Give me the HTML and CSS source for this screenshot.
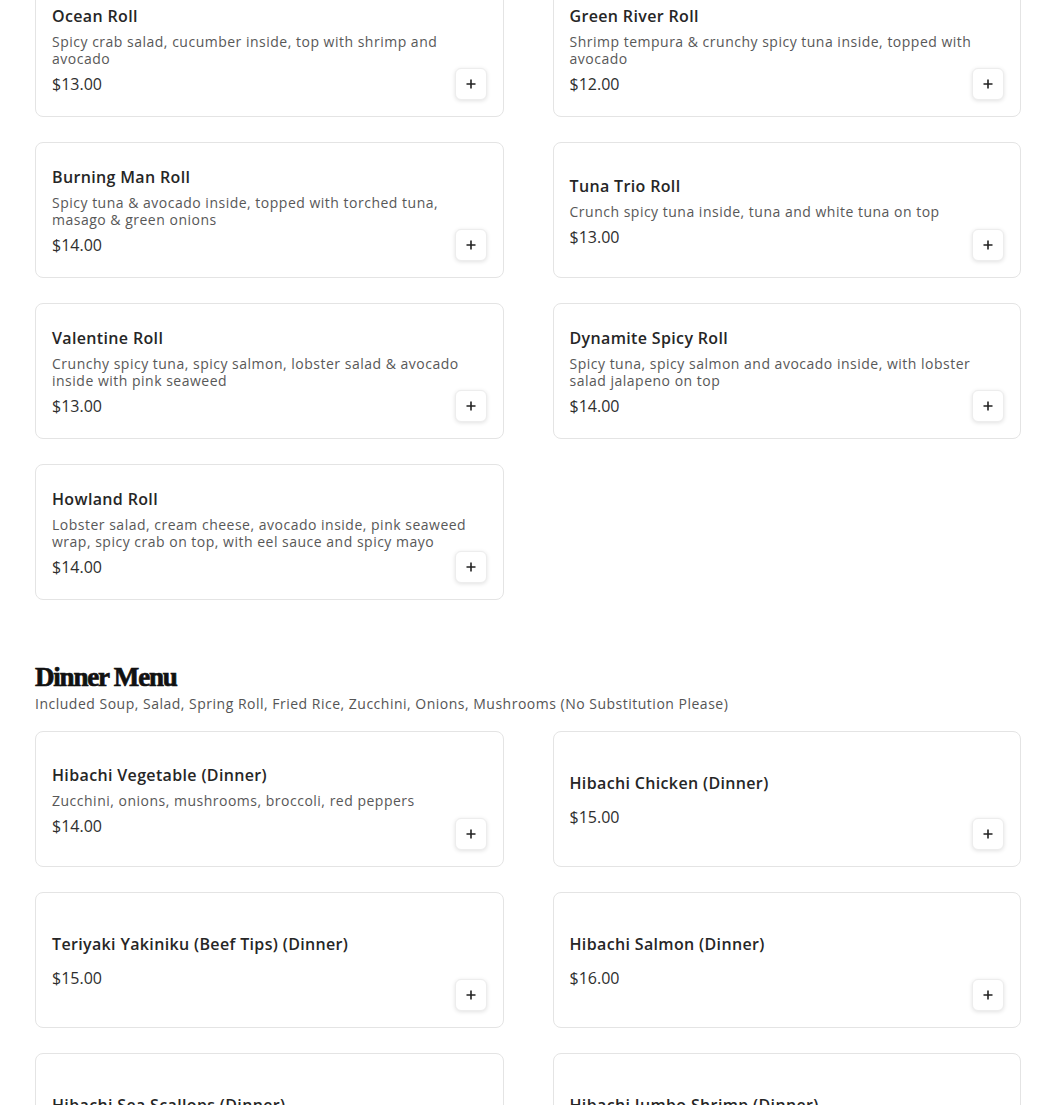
FILE: index.html
```html
<!DOCTYPE html>
<html lang="en">
<head>
<meta charset="utf-8">
<title>Menu</title>
<link rel="stylesheet" href="styles.css">
</head>
<body>
<main class="page">
  <section class="section section-first">
    <div class="grid">
      <div class="card"><div class="info"><h3 class="name">Ocean Roll</h3><p class="desc">Spicy crab salad, cucumber inside, top with shrimp and avocado</p><div class="price">$13.00</div></div><button class="add" aria-label="Add"><svg viewBox="0 0 12 12"><path d="M6 1.5v9M1.5 6h9"/></svg></button></div>
      <div class="card"><div class="info"><h3 class="name">Green River Roll</h3><p class="desc">Shrimp tempura &amp; crunchy spicy tuna inside, topped with avocado</p><div class="price">$12.00</div></div><button class="add" aria-label="Add"><svg viewBox="0 0 12 12"><path d="M6 1.5v9M1.5 6h9"/></svg></button></div>
      <div class="card"><div class="info"><h3 class="name">Burning Man Roll</h3><p class="desc">Spicy tuna &amp; avocado inside, topped with torched tuna, masago &amp; green onions</p><div class="price">$14.00</div></div><button class="add" aria-label="Add"><svg viewBox="0 0 12 12"><path d="M6 1.5v9M1.5 6h9"/></svg></button></div>
      <div class="card"><div class="info"><h3 class="name">Tuna Trio Roll</h3><p class="desc">Crunch spicy tuna inside, tuna and white tuna on top</p><div class="price">$13.00</div></div><button class="add" aria-label="Add"><svg viewBox="0 0 12 12"><path d="M6 1.5v9M1.5 6h9"/></svg></button></div>
      <div class="card"><div class="info"><h3 class="name">Valentine Roll</h3><p class="desc">Crunchy spicy tuna, spicy salmon, lobster salad &amp; avocado inside with pink seaweed</p><div class="price">$13.00</div></div><button class="add" aria-label="Add"><svg viewBox="0 0 12 12"><path d="M6 1.5v9M1.5 6h9"/></svg></button></div>
      <div class="card"><div class="info"><h3 class="name">Dynamite Spicy Roll</h3><p class="desc">Spicy tuna, spicy salmon and avocado inside, with lobster salad jalapeno on top</p><div class="price">$14.00</div></div><button class="add" aria-label="Add"><svg viewBox="0 0 12 12"><path d="M6 1.5v9M1.5 6h9"/></svg></button></div>
      <div class="card"><div class="info"><h3 class="name">Howland Roll</h3><p class="desc">Lobster salad, cream cheese, avocado inside, pink seaweed wrap, spicy crab on top, with eel sauce and spicy mayo</p><div class="price">$14.00</div></div><button class="add" aria-label="Add"><svg viewBox="0 0 12 12"><path d="M6 1.5v9M1.5 6h9"/></svg></button></div>
    </div>
  </section>

  <section class="section">
    <h2 class="section-title">Dinner Menu</h2>
    <p class="section-sub">Included Soup, Salad, Spring Roll, Fried Rice, Zucchini, Onions, Mushrooms (No Substitution Please)</p>
    <div class="grid">
      <div class="card"><div class="info"><h3 class="name">Hibachi Vegetable (Dinner)</h3><p class="desc">Zucchini, onions, mushrooms, broccoli, red peppers</p><div class="price">$14.00</div></div><button class="add" aria-label="Add"><svg viewBox="0 0 12 12"><path d="M6 1.5v9M1.5 6h9"/></svg></button></div>
      <div class="card"><div class="info"><h3 class="name">Hibachi Chicken (Dinner)</h3><div class="price price-gap">$15.00</div></div><button class="add" aria-label="Add"><svg viewBox="0 0 12 12"><path d="M6 1.5v9M1.5 6h9"/></svg></button></div>
      <div class="card"><div class="info"><h3 class="name">Teriyaki Yakiniku (Beef Tips) (Dinner)</h3><div class="price price-gap">$15.00</div></div><button class="add" aria-label="Add"><svg viewBox="0 0 12 12"><path d="M6 1.5v9M1.5 6h9"/></svg></button></div>
      <div class="card"><div class="info"><h3 class="name">Hibachi Salmon (Dinner)</h3><div class="price price-gap">$16.00</div></div><button class="add" aria-label="Add"><svg viewBox="0 0 12 12"><path d="M6 1.5v9M1.5 6h9"/></svg></button></div>
      <div class="card"><div class="info"><h3 class="name">Hibachi Sea Scallops (Dinner)</h3><div class="price price-gap">$18.00</div></div><button class="add" aria-label="Add"><svg viewBox="0 0 12 12"><path d="M6 1.5v9M1.5 6h9"/></svg></button></div>
      <div class="card"><div class="info"><h3 class="name">Hibachi Jumbo Shrimp (Dinner)</h3><div class="price price-gap">$17.00</div></div><button class="add" aria-label="Add"><svg viewBox="0 0 12 12"><path d="M6 1.5v9M1.5 6h9"/></svg></button></div>
    </div>
  </section>
</main>
</body>
</html>
```

FILE: styles.css
```css
* { box-sizing: border-box; }
html, body { margin: 0; padding: 0; background: #ffffff; }
body {
  font-family: "Open Sans", "Noto Sans", "Liberation Sans", sans-serif;
  color: #1c1c1c;
  overflow: hidden;
}
.page {
  width: 986px;
  margin: -19px 0 0 35px;
}
.section { margin-bottom: 61px; }
.grid {
  display: grid;
  grid-template-columns: 1fr 1fr;
  column-gap: 49px;
  row-gap: 25px;
}
.card {
  display: grid;
  height: 136px;
  padding: 16px;
  border: 1px solid #e4e4e4;
  border-radius: 8px;
  background: #fff;
}
.info {
  grid-area: 1 / 1;
  align-self: center;
  display: flex;
  flex-direction: column;
  padding-top: 2px;
}
.name {
  margin: 0;
  font-size: 16px;
  line-height: 24px;
  font-weight: 600;
  letter-spacing: 0.35px;
  color: #262626;
}
.desc {
  margin: 5px 0 5px;
  font-size: 14px;
  line-height: 17px;
  letter-spacing: 0.5px;
  color: #585858;
}
.price {
  font-size: 16px;
  line-height: 24px;
  color: #2e2e2e;
}
.price-gap { margin-top: 10px; }
.add {
  grid-area: 1 / 1;
  align-self: end;
  justify-self: end;
  width: 32px;
  height: 32px;
  padding: 0;
  display: flex;
  align-items: center;
  justify-content: center;
  background: #fff;
  border: 1px solid #ededed;
  border-radius: 6px;
  box-shadow: 0 1px 4px rgba(0,0,0,0.12);
  cursor: pointer;
}
.add svg {
  width: 12px;
  height: 12px;
  fill: none;
  stroke: #222;
  stroke-width: 1.6;
}
.section-title {
  margin: 0;
  font-family: "Liberation Serif", "DejaVu Serif", serif;
  font-weight: 900;
  font-size: 27px;
  line-height: 32px;
  letter-spacing: -1.2px;
  -webkit-text-stroke: 0.7px #111;
  color: #111;
}
.section-sub {
  margin: 1px 0 17px;
  font-size: 14px;
  line-height: 20px;
  letter-spacing: 0.5px;
  color: #555;
}
```
